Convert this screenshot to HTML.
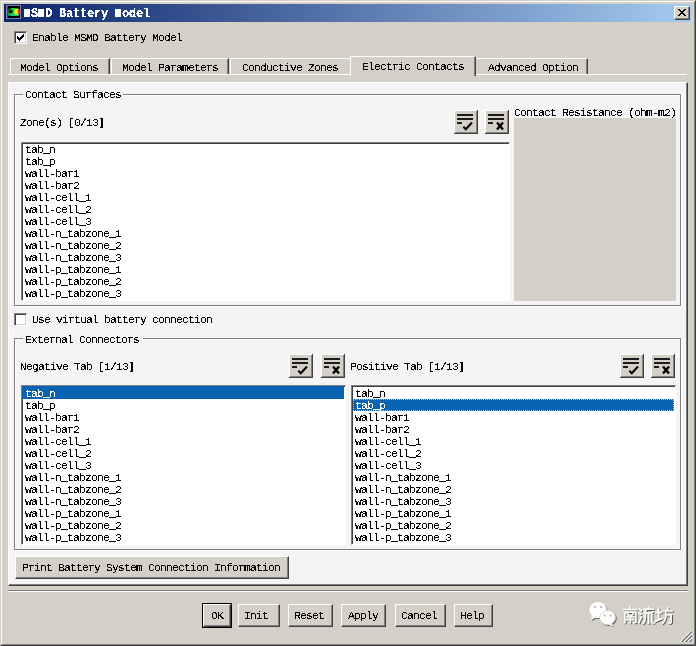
<!DOCTYPE html>
<html><head><meta charset="utf-8">
<style>
*{margin:0;padding:0;box-sizing:border-box}
html,body{width:696px;height:646px;overflow:hidden;background:#d4d0c8}
body{position:relative;font-family:"Liberation Mono",monospace;font-size:11.5px;letter-spacing:-0.9px;line-height:12px;color:#000}
.a{position:absolute}
.t{position:absolute;white-space:pre;line-height:12px;filter:url(#crisp)}
/* window frame */
#frame{left:0;top:0;width:696px;height:646px;border-top:1px solid #d4d0c8;border-left:1px solid #d4d0c8;border-right:1px solid #404040;border-bottom:1px solid #404040}
#frame2{left:1px;top:1px;width:694px;height:644px;border-top:1px solid #fff;border-left:1px solid #fff;border-right:1px solid #808080;border-bottom:1px solid #808080}
#title{left:4px;top:4px;width:687px;height:18px;background:linear-gradient(to right,#0a246a,#a6caf0)}
.btn{position:absolute;background:#d4d0c8;border-top:1px solid #fff;border-left:1px solid #fff;border-right:1px solid #404040;border-bottom:1px solid #404040;box-shadow:inset -1px -1px 0 #808080}
.chk{position:absolute;width:13px;height:13px;background:#fff;border-top:1px solid #808080;border-left:1px solid #808080;border-right:1px solid #fff;border-bottom:1px solid #fff;box-shadow:inset 1px 1px 0 #404040, inset -1px -1px 0 #d4d0c8}
.tab{position:absolute;background:#d4d0c8;border-top:1px solid #fff;border-left:1px solid #fff;border-right:1px solid #404040;box-shadow:inset -1px 0 0 #808080}
#panel{left:8px;top:82px;width:680px;height:504px;background:#f4f4f4;border-top:1px solid #fff;border-left:1px solid #fff;border-right:1px solid #404040;border-bottom:1px solid #404040;box-shadow:inset -1px -1px 0 #808080}
.grp{position:absolute;border:1px solid #808080;box-shadow:1px 1px 0 #fff, inset 1px 1px 0 #fff}
.lst{position:absolute;background:#fff;border-top:1px solid #808080;border-left:1px solid #808080;border-right:1px solid #fff;border-bottom:1px solid #fff;box-shadow:inset 1px 1px 0 #404040}
.sel{background:#0863b3;color:#fff}
</style></head><body>
<svg width="0" height="0" style="position:absolute">
<defs>
<filter id="crisp"><feComponentTransfer><feFuncA type="discrete" tableValues="0 0 1 1 1"/></feComponentTransfer></filter>
<symbol id="ibtn" viewBox="0 0 24 24">
<g shape-rendering="crispEdges">
<rect x="0" y="0" width="24" height="24" fill="#404040"/>
<rect x="0" y="0" width="23" height="23" fill="#fff"/>
<rect x="1" y="1" width="22" height="22" fill="#808080"/>
<rect x="1" y="1" width="21" height="21" fill="#d4d0c8"/>
<rect x="3" y="4" width="16" height="2" fill="#1c1c1c"/>
<rect x="3" y="8" width="16" height="2" fill="#1c1c1c"/>
<rect x="3" y="12" width="5" height="2" fill="#1c1c1c"/>
</g>
</symbol>
<symbol id="ichk" viewBox="0 0 24 24"><use href="#ibtn"/><path d="M9.3 16.8 L11.8 19.2 L18 12.5" stroke="#000" stroke-width="2.1" fill="none"/></symbol>
<symbol id="ix" viewBox="0 0 24 24"><use href="#ibtn"/><path d="M12 12.5 L18 19.5 M18 12.5 L12 19.5" stroke="#000" stroke-width="2.4" fill="none"/></symbol>
</defs></svg>
<div id="frame" class="a"></div>
<div id="frame2" class="a"></div>
<div id="title" class="a"></div>
<svg class="a" style="left:5px;top:4px" width="18" height="17">
<rect x="1" y="1" width="15" height="14" fill="#7c7ca8"/>
<rect x="2.5" y="2" width="12.5" height="12" fill="#000"/>
<ellipse cx="8.5" cy="8" rx="6" ry="4" fill="#22dd22"/>
<ellipse cx="12" cy="8" rx="2.6" ry="3.6" fill="#eeee22"/>
<rect x="12.8" y="6" width="2" height="4" fill="#dd3300"/>
<ellipse cx="5.5" cy="7.5" rx="2.2" ry="2" fill="#000"/>
<rect x="3" y="10.5" width="11" height="1.5" fill="#22bbaa" opacity="0.7"/>
</svg>
<div class="a" style="left:24px;top:9px;width:6px;height:8px;background:#fff"></div>
<div class="a" style="left:38px;top:9px;width:6px;height:8px;background:#fff"></div>
<div class="a" style="left:115px;top:9px;width:6px;height:8px;background:#fff"></div>
<div class="t" style="left:24px;top:8px;color:#fff;font-weight:bold;letter-spacing:-0.2px;font-size:12px"> S D Battery  odel</div>
<div class="btn" style="left:674px;top:6px;width:16px;height:14px"></div>
<svg class="a" style="left:674px;top:6px" width="16" height="14" shape-rendering="crispEdges" fill="#000"><rect x="4" y="3" width="1" height="1"/><rect x="5" y="3" width="1" height="1"/><rect x="10" y="3" width="1" height="1"/><rect x="11" y="3" width="1" height="1"/><rect x="5" y="4" width="1" height="1"/><rect x="6" y="4" width="1" height="1"/><rect x="9" y="4" width="1" height="1"/><rect x="10" y="4" width="1" height="1"/><rect x="6" y="5" width="1" height="1"/><rect x="7" y="5" width="1" height="1"/><rect x="8" y="5" width="1" height="1"/><rect x="9" y="5" width="1" height="1"/><rect x="7" y="6" width="1" height="1"/><rect x="8" y="6" width="1" height="1"/><rect x="6" y="7" width="1" height="1"/><rect x="7" y="7" width="1" height="1"/><rect x="8" y="7" width="1" height="1"/><rect x="9" y="7" width="1" height="1"/><rect x="5" y="8" width="1" height="1"/><rect x="6" y="8" width="1" height="1"/><rect x="9" y="8" width="1" height="1"/><rect x="10" y="8" width="1" height="1"/><rect x="4" y="9" width="1" height="1"/><rect x="5" y="9" width="1" height="1"/><rect x="10" y="9" width="1" height="1"/><rect x="11" y="9" width="1" height="1"/></svg>


<!-- Enable checkbox -->
<div class="chk" style="left:14px;top:31px"></div>
<svg class="a" style="left:17px;top:34px" width="7" height="7" shape-rendering="crispEdges" fill="#000">
<rect x="6" y="0" width="1" height="1"/><rect x="5" y="1" width="2" height="1"/><rect x="0" y="2" width="1" height="1"/><rect x="4" y="2" width="3" height="1"/>
<rect x="0" y="3" width="2" height="1"/><rect x="3" y="3" width="3" height="1"/><rect x="0" y="4" width="5" height="1"/><rect x="1" y="5" width="3" height="1"/><rect x="2" y="6" width="1" height="1"/>
</svg>
<div class="t" style="left:32px;top:32px">Enable MSMD Battery Model</div>

<!-- tabs -->
<div class="a" style="left:8px;top:74px;width:679px;height:1px;background:#fff"></div>
<div class="tab" style="left:10px;top:58px;width:100px;height:16px"></div>
<div class="t" style="left:20px;top:62px">Model Options</div>
<div class="tab" style="left:111px;top:58px;width:118px;height:16px"></div>
<div class="t" style="left:122px;top:62px">Model Parameters</div>
<div class="tab" style="left:230px;top:58px;width:122px;height:16px"></div>
<div class="t" style="left:242px;top:62px">Conductive Zones</div>
<div class="tab" style="left:475px;top:58px;width:113px;height:16px"></div>
<div class="t" style="left:488px;top:62px">Advanced Option</div>
<div class="tab" style="left:350px;top:56px;width:126px;height:20px"></div>
<div class="t" style="left:362px;top:61px">Electric Contacts</div>

<div id="panel" class="a"></div>

<!-- Contact Surfaces group -->
<div class="grp" style="left:14px;top:94px;width:667px;height:212px"></div>
<div class="a" style="left:23px;top:90px;width:100px;height:9px;background:#f4f4f4"></div>
<div class="t" style="left:25px;top:89px">Contact Surfaces</div>
<div class="t" style="left:20px;top:117px">Zone(s) [0/13]</div>
<svg class="a" style="left:454px;top:110px" width="24" height="24"><use href="#ichk"/></svg>
<svg class="a" style="left:485px;top:110px" width="24" height="24"><use href="#ix"/></svg>
<div class="lst" style="left:21px;top:142px;width:489px;height:159px"></div>
<div class="t" style="left:25px;top:144px">tab_n
tab_p
wall-bar1
wall-bar2
wall-cell_1
wall-cell_2
wall-cell_3
wall-n_tabzone_1
wall-n_tabzone_2
wall-n_tabzone_3
wall-p_tabzone_1
wall-p_tabzone_2
wall-p_tabzone_3</div>
<div class="t" style="left:514px;top:107px">Contact Resistance (ohm-m2)</div>
<div class="a" style="left:514px;top:118px;width:162px;height:183px;background:#d4d0c8"></div>

<!-- Use virtual -->
<div class="chk" style="left:14px;top:313px"></div>
<div class="t" style="left:32px;top:314px">Use virtual battery connection</div>

<!-- External Connectors -->
<div class="grp" style="left:14px;top:338px;width:667px;height:212px"></div>
<div class="a" style="left:23px;top:335px;width:120px;height:9px;background:#f4f4f4"></div>
<div class="t" style="left:25px;top:334px">External Connectors</div>
<div class="t" style="left:20px;top:361px">Negative Tab [1/13]</div>
<svg class="a" style="left:289px;top:354px" width="24" height="24"><use href="#ichk"/></svg>
<svg class="a" style="left:321px;top:354px" width="24" height="24"><use href="#ix"/></svg>
<div class="t" style="left:350px;top:361px">Positive Tab [1/13]</div>
<svg class="a" style="left:620px;top:354px" width="24" height="24"><use href="#ichk"/></svg>
<svg class="a" style="left:651px;top:354px" width="24" height="24"><use href="#ix"/></svg>

<div class="lst" style="left:21px;top:385px;width:325px;height:160px"></div>
<div class="a sel" style="left:22px;top:386px;width:322px;height:13px"></div>
<div class="t" style="left:25px;top:388px"><span style="color:#fff">tab_n</span>
tab_p
wall-bar1
wall-bar2
wall-cell_1
wall-cell_2
wall-cell_3
wall-n_tabzone_1
wall-n_tabzone_2
wall-n_tabzone_3
wall-p_tabzone_1
wall-p_tabzone_2
wall-p_tabzone_3</div>

<div class="lst" style="left:351px;top:385px;width:325px;height:160px"></div>
<div class="a sel" style="left:353px;top:399px;width:321px;height:12px;border:1px dotted #9cc4ec"></div>
<div class="t" style="left:355px;top:388px">tab_n
<span style="color:#fff">tab_p</span>
wall-bar1
wall-bar2
wall-cell_1
wall-cell_2
wall-cell_3
wall-n_tabzone_1
wall-n_tabzone_2
wall-n_tabzone_3
wall-p_tabzone_1
wall-p_tabzone_2
wall-p_tabzone_3</div>

<!-- Print button -->
<div class="btn" style="left:15px;top:556px;width:274px;height:23px"></div>
<div class="t" style="left:22px;top:562px">Print Battery System Connection Information</div>

<!-- separator -->
<div class="a" style="left:8px;top:590px;width:680px;height:1px;background:#808080"></div>
<div class="a" style="left:8px;top:591px;width:680px;height:1px;background:#fff"></div>

<!-- bottom buttons -->
<div class="a" style="left:202px;top:603px;width:30px;height:25px;border:1px solid #000"></div>
<div class="btn" style="left:203px;top:604px;width:28px;height:23px"></div>
<div class="t" style="left:211px;top:610px">OK</div>
<div class="btn" style="left:238px;top:604px;width:42px;height:23px"></div>
<div class="t" style="left:244px;top:610px">Init</div>
<div class="btn" style="left:288px;top:604px;width:45px;height:23px"></div>
<div class="t" style="left:294px;top:610px">Reset</div>
<div class="btn" style="left:341px;top:604px;width:45px;height:23px"></div>
<div class="t" style="left:348px;top:610px">Apply</div>
<div class="btn" style="left:395px;top:604px;width:51px;height:23px"></div>
<div class="t" style="left:401px;top:610px">Cancel</div>
<div class="btn" style="left:454px;top:604px;width:39px;height:23px"></div>
<div class="t" style="left:460px;top:610px">Help</div>


<!-- watermark -->
<svg class="a" style="left:586px;top:598px" width="100" height="32">
<defs><filter id="sh" x="-20%" y="-20%" width="140%" height="140%"><feDropShadow dx="1" dy="1" stdDeviation="0.5" flood-color="#000" flood-opacity="0.6"/></filter></defs>
<g filter="url(#sh)" fill="#fff">
<ellipse cx="12" cy="12" rx="8.5" ry="8"/>
<path d="M6 18 L5 22 L9.5 19.5Z"/>
</g>
<g filter="url(#sh)" fill="#fdfdfd">
<ellipse cx="21.5" cy="19.5" rx="7.8" ry="7.2" stroke="#d4d0c8" stroke-width="0.8"/>
<path d="M25 25 L27.5 28.5 L22.5 26.5Z"/>
</g>
<g fill="#aaa"><circle cx="9" cy="9" r="1"/><circle cx="15" cy="9" r="1"/><circle cx="18.5" cy="17.5" r="0.9"/><circle cx="24.5" cy="17.5" r="0.9"/></g>
<g filter="url(#sh)"><g transform="translate(37,9) scale(0.91,0.86) translate(-37,-8)" stroke="#fff" stroke-width="1.7" fill="none" stroke-linecap="square">
<!-- 南 -->
<path d="M38 11 H52 M45 8 V11 M39 14 V26 M39 14 H51 V25.5 Q51 26.5 49 26 M42 16 L43.5 18 M48 16 L46.5 18 M41.5 19.5 H48.5 M41.5 22.5 H48.5 M45 19.5 V26"/>
<!-- 流 -->
<path d="M55 10 L57 12 M54.5 15 L56.5 16.5 M54.5 26 L57 20 M60 10.5 H70 M65 8.5 V10.5 M62.5 11 L60.5 15 H68.5 L70 13.5 M61.5 17 V20 Q61.5 25 59 27 M65 17 V26.5 M68.5 17 V25 Q68.5 26.5 70.5 26.5"/>
<!-- 坊 -->
<path d="M73 14.5 H79 M76 9 V23 M72.5 24.5 L79.5 21.5 M81 12.5 H91 M86 8.5 V12.5 M84 12.5 V19 Q83.5 24 80.5 27 M84 17 H90 V25 Q90 27 87.5 26.5"/>
</g></g>
</svg>
<!-- grip -->
<svg class="a" style="left:678px;top:628px" width="16" height="16" shape-rendering="crispEdges">
<path d="M2 14 L14 2 M6 14 L14 6 M10 14 L14 10" stroke="#fff" stroke-width="1" />
<path d="M3 14 L14 3 M4 14 L14 4 M7 14 L14 7 M8 14 L14 8 M11 14 L14 11 M12 14 L14 12" stroke="#808080" stroke-width="1"/>
</svg>
</body></html>
